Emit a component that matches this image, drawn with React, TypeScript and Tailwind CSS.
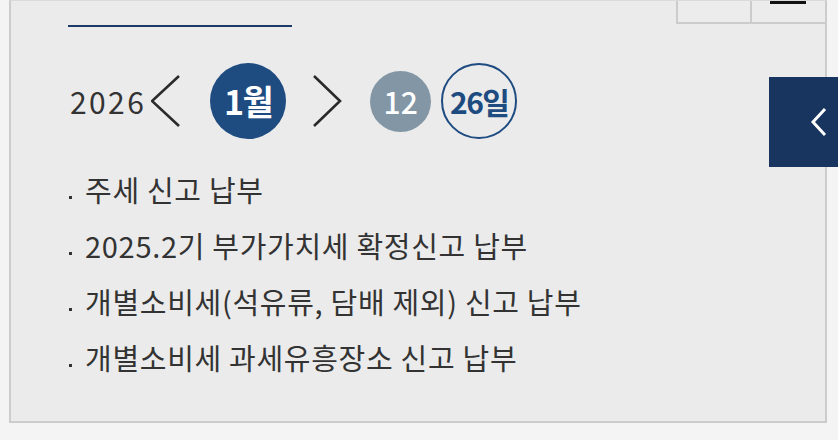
import React from "react";

export default function App() {
  const items = [
    "주세 신고 납부",
    "2025.2기 부가가치세 확정신고 납부",
    "개별소비세(석유류, 담배 제외) 신고 납부",
    "개별소비세 과세유흥장소 신고 납부",
  ];
  return (
    <div
      className="relative w-[838px] h-[440px] bg-[#f4f4f4] overflow-hidden"
      style={{ fontFamily: '"Noto Sans CJK KR", "Noto Sans", sans-serif' }}
    >
      <div className="relative ml-[9px] w-[818px] h-[423px] bg-[#ebebeb] border-x-2 border-b-2 border-t border-[#cccccc] border-t-[#dadada]">
        {/* top right tabs */}
        <div className="absolute right-0 top-0 flex h-[23px]">
          <div className="w-[74px] h-full border-l-2 border-b-2 border-[#cccccc] bg-[#ececec]" />
          <div className="relative w-[75px] h-full border-l-2 border-b-2 border-[#cccccc] bg-[#ececec]">
            <div className="absolute left-[18px] top-0 w-[36px] h-[3px] bg-[#111]" />
          </div>
        </div>

        <div className="pl-[57px] pt-[24px]">
          <div className="w-[224px] h-[2px] bg-[#1c3a66]" />

          <div className="flex items-center mt-[36px] h-[76px]">
            <span className="ml-[2px] text-[30px] text-[#333] leading-none tracking-[2.4px]">2026</span>
            <svg width="30" height="52" viewBox="0 0 30 52" className="ml-[5px]">
              <polyline points="28,1 1,26 28,51" fill="none" stroke="#2a2a2a" strokeWidth="2.6" />
            </svg>
            <div className="ml-[29px] w-[76px] h-[76px] rounded-full bg-[#1e4b80] flex items-center justify-center text-white font-bold text-[34px] leading-none tracking-[-1.5px]">
              1월
            </div>
            <svg width="30" height="52" viewBox="0 0 30 52" className="ml-[26px]">
              <polyline points="2,1 28,26 2,51" fill="none" stroke="#2a2a2a" strokeWidth="2.6" />
            </svg>
            <div className="ml-[28px] w-[61px] h-[61px] rounded-full bg-[#8296a5] flex items-center justify-center text-white text-[30px] leading-none font-medium">
              12
            </div>
            <div className="ml-[10px] w-[76px] h-[76px] rounded-full border-2 border-[#1e4b80] flex items-center justify-center text-[#1e4b80] text-[30px] leading-none font-bold tracking-[-1.5px]">
              26일
            </div>
          </div>

          <ul className="mt-[23px] flex flex-col">
            {items.map((t) => (
              <li key={t} className="flex items-center h-[56px] text-[29px] text-[#333] tracking-[0.7px]">
                <span className="w-[17px] flex items-end h-[30px] pb-[6px] pl-[1px]">
                  <span className="block w-[3px] h-[3px] bg-[#333]" />
                </span>
                <span>{t}</span>
              </li>
            ))}
          </ul>
        </div>
      </div>

      {/* side navy button */}
      <div className="absolute left-[769px] top-[77px] w-[69px] h-[90px] bg-[#17355e] flex items-center justify-end pr-[10px]">
        <svg width="18" height="30" viewBox="0 0 18 30">
          <polyline points="15,2 3,15 15,28" fill="none" stroke="#ffffff" strokeWidth="3" />
        </svg>
      </div>
    </div>
  );
}
